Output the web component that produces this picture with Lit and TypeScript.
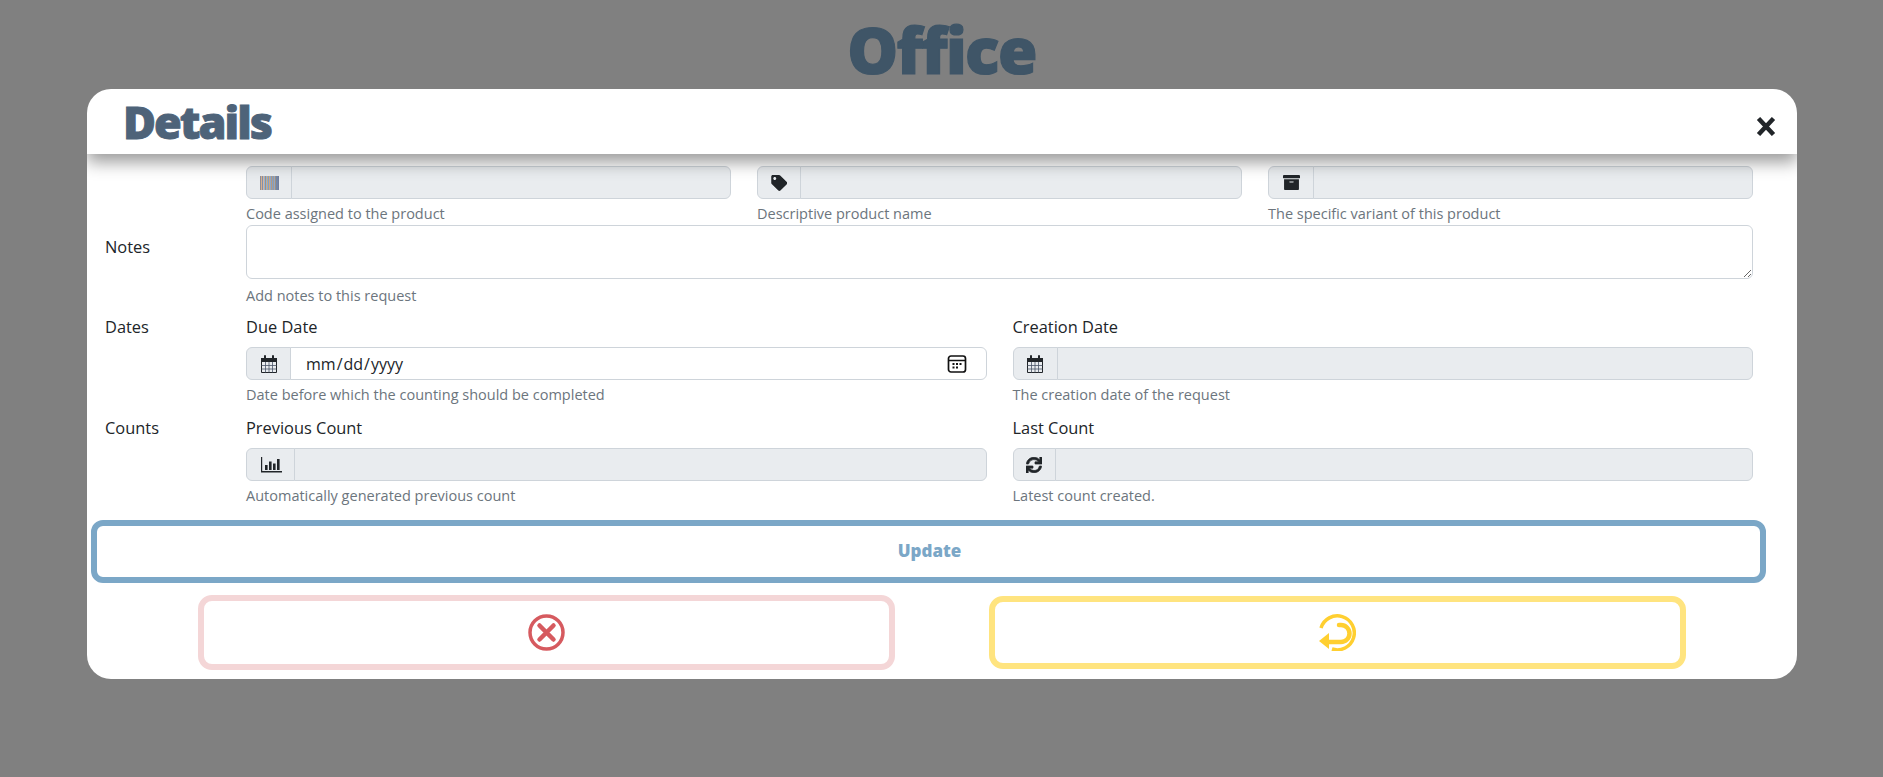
import { LitElement, html, svg, css } from "lit";
import { customElement } from "lit/decorators.js";

const BARCODE = ["#8d8f9a", "#d8b08c", "#7f8fb0", "#d9b79a", "#8fb3d6", "#a88f7c", "#8fb3d6", "#c9a77e", "#7f9fc9", "#c8a98a", "#8fa8c8", "#b59a80", "#7f9fc9", "#a89a8c", "#8fa8c8", "#a08f80", "#7088ac", "#7a86a0", "#6f7f9f"];

const icons = {
  barcode: html`<svg width="19" height="14" viewBox="0 0 19 14">
    ${BARCODE.map((c, i) => svg`<rect x=${i} y="0" width="1" height="14" fill=${c}></rect>`)}
  </svg>`,
  tag: html`<svg width="16.5" height="16" viewBox="0 0 512 512" fill="#212529">
    <path d="M0 252.118V48C0 21.49 21.49 0 48 0h204.118a48 48 0 0 1 33.941 14.059l211.882 211.882c18.745 18.745 18.745 49.137 0 67.882L293.823 497.941c-18.745 18.745-49.137 18.745-67.882 0L14.059 286.059A48 48 0 0 1 0 252.118zM112 64c-26.51 0-48 21.49-48 48s21.49 48 48 48 48-21.49 48-48-21.49-48-48-48z"></path>
  </svg>`,
  archive: html`<svg width="19" height="17" viewBox="0 0 512 512" fill="#212529">
    <path d="M32 448c0 17.7 14.3 32 32 32h384c17.7 0 32-14.3 32-32V160H32v288zm160-212c0-6.6 5.4-12 12-12h104c6.6 0 12 5.4 12 12v8c0 6.6-5.4 12-12 12H204c-6.6 0-12-5.4-12-12v-8zM480 32H32C14.3 32 0 46.3 0 64v48c0 8.8 7.2 16 16 16h480c8.8 0 16-7.2 16-16V64c0-17.7-14.3-32-32-32z"></path>
  </svg>`,
  calendar: html`<svg width="18" height="18" viewBox="0 0 18 18" fill="none" stroke="#212529">
    <path d="M1.500 3.500h15v14h-15z" stroke-width="1"></path>
    <path d="M1 3h16v4H1z" fill="#212529" stroke="none"></path>
    <path d="M5 1v3.500M13 1v3.500" stroke-width="2" stroke-linecap="round"></path>
    <path d="M1.500 10.500h15M1.500 14h15M5.500 7v10.500M9 7v10.500M12.500 7v10.500" stroke="#4a5568" stroke-width=".8"></path>
  </svg>`,
  chart: html`<svg width="22" height="16" viewBox="0 0 22 16" fill="#212529">
    <path d="M1 0h1.200v14H22v1.400H1z"></path>
    <path d="M5 8h2.600v5H5zM9 4.500h2.600V13H9zM13 6.500h2.600V13H13zM17 2h2.600v11H17z"></path>
  </svg>`,
  sync: html`<svg width="16" height="16" viewBox="0 0 512 512" fill="#212529" stroke="#212529" stroke-width="24">
    <path d="M440.65 12.57l4 82.77A247.16 247.16 0 0 0 255.83 8C134.73 8 33.91 94.92 12.29 209.82A12 12 0 0 0 24.09 224h49.05a12 12 0 0 0 11.67-9.26 175.91 175.91 0 0 1 317-56.94l-101.46-4.86a12 12 0 0 0-12.57 12v47.41a12 12 0 0 0 12 12H500a12 12 0 0 0 12-12V12a12 12 0 0 0-12-12h-47.37a12 12 0 0 0-11.98 12.57zM255.83 432a175.61 175.61 0 0 1-146-77.8l101.8 4.87a12 12 0 0 0 12.57-12v-47.4a12 12 0 0 0-12-12H12a12 12 0 0 0-12 12V500a12 12 0 0 0 12 12h47.35a12 12 0 0 0 12-12.6l-4.15-82.57A247.17 247.17 0 0 0 255.83 504c121.11 0 221.93-86.92 243.55-201.82a12 12 0 0 0-11.8-14.18h-49.05a12 12 0 0 0-11.67 9.26A175.86 175.86 0 0 1 255.83 432z"></path>
  </svg>`,
};

const PICKER_ICON = `url("data:image/svg+xml,%3Csvg xmlns='http://www.w3.org/2000/svg' width='20' height='20' viewBox='0 0 20 20'%3E%3Crect x='1.500' y='2' width='17' height='16' rx='2.500' fill='none' stroke='%23111' stroke-width='1.700'/%3E%3Cpath d='M1.500 6.500h17' stroke='%23111' stroke-width='1.700'/%3E%3Cg fill='%23111'%3E%3Crect x='5.500' y='9' width='2' height='2'/%3E%3Crect x='9' y='9' width='2' height='2'/%3E%3Crect x='12.500' y='9' width='2' height='2'/%3E%3Crect x='5.500' y='12.500' width='2' height='2'/%3E%3Crect x='9' y='12.500' width='2' height='2'/%3E%3C/g%3E%3C/svg%3E")`;

@customElement("app-root")
export class AppRoot extends LitElement {
  static styles = css`
    :host {
      display: block;
      position: relative;
      height: 777px;
      overflow: hidden;
      background: #808080;
      font-family: "Open Sans", "Noto Sans", sans-serif;
      font-size: 16.4px;
      color: #212529;
    }

    .page-title {
      margin: 0;
      padding-top: 11px;
      text-align: center;
      font-size: 64px;
      line-height: 78px;
      font-weight: 800;
      letter-spacing: -1.7px;
      -webkit-text-stroke: 1.2px #3f5567;
      color: #3f5567;
    }

    .modal {
      position: absolute;
      left: 87px;
      top: 89px;
      width: 1710px;
      height: 590px;
      background: #fff;
      border-radius: 24px;
      overflow: hidden;
    }

    .modal-header {
      position: relative;
      height: 65px;
      padding: 0 21px 0 36px;
      display: flex;
      align-items: center;
      justify-content: space-between;
      box-shadow: 0 8px 16px rgba(0, 0, 0, 0.4);
    }

    .modal-header h2 {
      margin: 0;
      font-size: 45px;
      line-height: 65px;
      font-weight: 800;
      letter-spacing: -2px;
      -webkit-text-stroke: 0.9px #4e6379;
      color: #4e6379;
    }

    .close {
      display: block;
      margin-top: 9px;
    }

    .form {
      padding: 12px 44px 0 18px;
    }

    .row {
      display: grid;
      grid-template-columns: 141px 1fr;
    }

    .row-label,
    .field-label {
      line-height: 24px;
      padding-top: 1px;
    }

    .cols-3 {
      display: grid;
      grid-template-columns: repeat(3, 1fr);
      column-gap: 26px;
    }

    .cols-2 {
      display: grid;
      grid-template-columns: repeat(2, 1fr);
      column-gap: 26px;
    }

    .field-label {
      margin-bottom: 8px;
    }

    .group {
      display: flex;
      height: 33px;
    }

    .addon {
      flex: none;
      display: flex;
      align-items: center;
      justify-content: center;
      padding: 0 12.5px;
      background: #e9ecef;
      border: 1px solid #ced4da;
      border-radius: 6px 0 0 6px;
    }

    .control {
      flex: 1;
      min-width: 0;
      margin: 0 0 0 -1px;
      padding: 0 12px 0 14px;
      box-sizing: border-box;
      background: #e9ecef;
      border: 1px solid #ced4da;
      border-radius: 0 6px 6px 0;
      font: inherit;
      font-size: 16px;
      color: #212529;
      outline: none;
    }

    .control.live {
      background: #fff;
    }

    .control::-webkit-calendar-picker-indicator {
      width: 20px;
      height: 20px;
      padding: 0;
      margin-right: 7px;
      background-image: var(--picker);
      background-size: 20px 20px;
    }

    textarea {
      display: block;
      width: 100%;
      height: 54px;
      box-sizing: border-box;
      padding: 6px 12px;
      background: #fff;
      border: 1px solid #ced4da;
      border-radius: 6px;
      font: inherit;
      outline: none;
    }

    .help {
      margin-top: 6px;
      height: 18px;
      line-height: 18px;
      font-size: 14.5px;
      color: #6c757d;
    }

    .row-first {
      margin-bottom: 2px;
    }

    .row-notes {
      margin-bottom: 9px;
    }

    .row-notes .row-label {
      padding-top: 10px;
    }

    .row-notes .help {
      margin-top: 8px;
    }

    .row-dates {
      margin-bottom: 11px;
    }

    .update {
      display: block;
      width: 1675px;
      height: 63px;
      margin: 15px 0 0 4px;
      padding: 0 0 2px 2px;
      background: #fff;
      border: 6px solid #7ba7c7;
      border-radius: 12px;
      font: inherit;
      font-size: 17px;
      font-weight: 800;
      color: #7ba7c7;
    }

    .actions {
      display: flex;
      gap: 94px;
      margin: 12px 0 0 111px;
    }

    .icon-btn {
      display: flex;
      align-items: center;
      justify-content: center;
      width: 697px;
      height: 75px;
      padding: 0;
      background: #fff;
      border: 6px solid;
      border-radius: 14px;
    }

    .cancel {
      border-color: #f4d6d7;
    }

    .reset {
      border-color: #ffe47f;
      height: 73px;
      margin-top: 1px;
    }
  `;

  private field(icon: unknown, help: string, label = "") {
    return html`<div>
      ${label ? html`<div class="field-label">${label}</div>` : ""}
      <div class="group">
        <span class="addon">${icon}</span>
        <input class="control" disabled />
      </div>
      <div class="help">${help}</div>
    </div>`;
  }

  render() {
    return html`
      <h1 class="page-title">Office</h1>
      <div class="modal" style=${`--picker: ${PICKER_ICON}`}>
        <header class="modal-header">
          <h2>Details</h2>
          <svg class="close" width="20" height="19" viewBox="0 0 20 19" fill="none" stroke="#212529" stroke-width="4.500">
            <path d="M2.500 1.500l15 16M17.500 1.500l-15 16"></path>
          </svg>
        </header>
        <div class="form">
          <div class="row row-first">
            <div></div>
            <div class="cols-3">
              ${this.field(icons.barcode, "Code assigned to the product")}
              ${this.field(icons.tag, "Descriptive product name")}
              ${this.field(icons.archive, "The specific variant of this product")}
            </div>
          </div>
          <div class="row row-notes">
            <div class="row-label">Notes</div>
            <div>
              <textarea></textarea>
              <div class="help">Add notes to this request</div>
            </div>
          </div>
          <div class="row row-dates">
            <div class="row-label">Dates</div>
            <div class="cols-2">
              <div>
                <div class="field-label">Due Date</div>
                <div class="group">
                  <span class="addon">${icons.calendar}</span>
                  <input class="control live" type="date" />
                </div>
                <div class="help">Date before which the counting should be completed</div>
              </div>
              ${this.field(icons.calendar, "The creation date of the request", "Creation Date")}
            </div>
          </div>
          <div class="row">
            <div class="row-label">Counts</div>
            <div class="cols-2">
              ${this.field(icons.chart, "Automatically generated previous count", "Previous Count")}
              ${this.field(icons.sync, "Latest count created.", "Last Count")}
            </div>
          </div>
        </div>
        <button class="update">Update</button>
        <div class="actions">
          <button class="icon-btn cancel">
            <svg width="37" height="37" viewBox="0 0 37 37" fill="none" stroke="#d65a5f">
              <circle cx="18.500" cy="18.500" r="16.500" stroke-width="3.500"></circle>
              <path d="M11.500 11.500l14 14M25.500 11.500l-14 14" stroke-width="4.500" stroke-linecap="round"></path>
            </svg>
          </button>
          <button class="icon-btn reset">
            <svg width="37" height="37" viewBox="0 0 37 37" fill="none" stroke="#ffcf30">
              <path d="M2 14A17 17 0 1 1 13 35" stroke-width="3.500"></path>
              <path d="M20 11h2a8.500 8.500 0 0 1 0 17H9" stroke-width="4.500" stroke-linecap="round"></path>
              <path d="M0 27l10-8v16z" fill="#ffcf30" stroke="none"></path>
            </svg>
          </button>
        </div>
      </div>
    `;
  }
}
